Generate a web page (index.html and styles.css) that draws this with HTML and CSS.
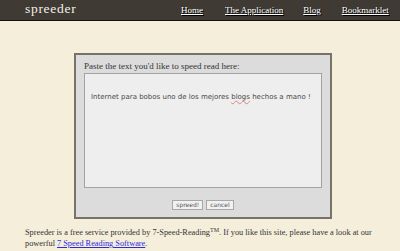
FILE: index.html
```html
<!DOCTYPE html>
<html>
<head>
<meta charset="utf-8">
<link rel="stylesheet" href="styles.css">
</head>
<body>
<div class="header">
  <div class="logo">spreeder</div>
  <nav class="nav">
    <a href="#" class="nav-home">Home</a>
    <a href="#" class="nav-app">The Application</a>
    <a href="#" class="nav-blog">Blog</a>
    <a href="#" class="nav-book">Bookmarklet</a>
  </nav>
</div>
<div class="main">
  <div class="box">
    <div class="label">Paste the text you'd like to speed read here:</div>
    <div class="textarea">Internet para bobos uno de los mejores <span class="spell">blogs</span> hechos a mano !</div>
    <div class="buttons">
      <button class="btn">spreed!</button>
      <button class="btn">cancel</button>
    </div>
  </div>
  <p class="footer">Spreeder is a free service provided by 7-Speed-Reading<sup>TM</sup>. If you like this site, please have a look at our powerful <a href="#">7 Speed Reading Software</a>.</p>
</div>
</body>
</html>
```
FILE: styles.css
```css
html, body {
  margin: 0;
  padding: 0;
  background: #f5eedb;
  font-family: "Liberation Serif", "DejaVu Serif", serif;
}
.header {
  height: 20px;
  background: #3f3a33;
  border-bottom: 1px solid #111;
  display: flex;
  align-items: center;
  padding-left: 25px;
  box-sizing: content-box;
  white-space: nowrap;
}
.logo {
  width: 156px;
  flex: none;
  color: #f3f0e8;
  font-size: 13.5px;
  letter-spacing: 0.7px;
  line-height: 20px;
  margin-top: -2px;
}
.nav {
  display: flex;
  flex: none;
}
.nav a {
  color: #fff;
  font-size: 9px;
  text-decoration: underline;
  text-shadow: 1px 1px 0 #000;
  line-height: 20px;
  white-space: nowrap;
}
.nav-app { margin-left: 22px; }
.nav-blog { margin-left: 20px; }
.nav-book { margin-left: 21px; }
.main {
  padding: 32px 0 0 74px;
}
.box {
  width: 258px;
  box-sizing: border-box;
  border: 2px solid #77726a;
  background: #dcdcdc;
  padding: 4px 8px 7px 8px;
}
.label {
  font-size: 9px;
  color: #333;
  line-height: 14px;
}
.textarea {
  height: 115px;
  box-sizing: border-box;
  border: 1px solid #a3a3a3;
  background: #eeeeee;
  padding: 18px 6px 0 6px;
  font-family: "DejaVu Sans", Verdana, sans-serif;
  font-size: 7px;
  color: #4a4a4a;
  line-height: 11px;
  white-space: nowrap;
}
.spell {
  text-decoration: underline wavy #e08080;
  text-decoration-thickness: 1px;
}
.buttons {
  display: flex;
  justify-content: center;
  gap: 3px;
  margin-top: 12px;
}
.btn {
  font-family: "DejaVu Sans", sans-serif;
  font-size: 6px;
  color: #555;
  background: #f1f1f1;
  border: 1px solid #a8a8a8;
  padding: 0 3px;
  height: 10px;
  line-height: 8px;
  margin: 0;
}
.footer {
  margin: 8px 0 0 -49px;
  width: 360px;
  font-size: 8.3px;
  line-height: 11px;
  color: #333;
}
.footer sup {
  font-size: 6px;
  line-height: 0;
  vertical-align: 3px;
}
.footer a {
  color: #2a2ae0;
}
```
